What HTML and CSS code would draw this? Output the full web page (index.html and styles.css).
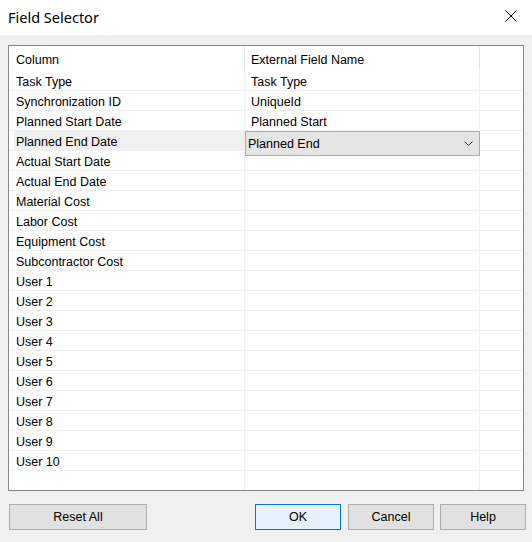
FILE: index.html
```html
<!DOCTYPE html>
<html>
<head>
<meta charset="utf-8">
<link rel="stylesheet" href="styles.css">
</head>
<body>
<div class="window">
  <div class="titlebar">
    <span class="title">Field Selector</span>
    <svg class="close" width="12" height="12" viewBox="0 0 12 12"><path d="M0.5 0.5 L11.5 11.5 M11.5 0.5 L0.5 11.5" stroke="#000" stroke-width="1" fill="none"/></svg>
  </div>
  <div class="content">
    <div class="grid">
      <div class="hrow">
        <div class="hc c1">Column</div>
        <div class="hc c2">External Field Name</div>
        <div class="hc c3"></div>
      </div>
      <div class="row"><div class="cell c1">Task Type</div><div class="cell c2">Task Type</div><div class="cell c3"></div></div>
      <div class="row"><div class="cell c1">Synchronization ID</div><div class="cell c2">UniqueId</div><div class="cell c3"></div></div>
      <div class="row"><div class="cell c1">Planned Start Date</div><div class="cell c2">Planned Start</div><div class="cell c3"></div></div>
      <div class="row"><div class="cell c1 sel">Planned End Date</div><div class="cell c2 has-combo">
        <div class="combo"><span>Planned End</span><svg class="chev" width="9" height="5" viewBox="0 0 9 5"><path d="M0.5 0.5 L4.5 4.5 L8.5 0.5" stroke="#333" stroke-width="1" fill="none"/></svg></div>
      </div><div class="cell c3"></div></div>
      <div class="row"><div class="cell c1">Actual Start Date</div><div class="cell c2"></div><div class="cell c3"></div></div>
      <div class="row"><div class="cell c1">Actual End Date</div><div class="cell c2"></div><div class="cell c3"></div></div>
      <div class="row"><div class="cell c1">Material Cost</div><div class="cell c2"></div><div class="cell c3"></div></div>
      <div class="row"><div class="cell c1">Labor Cost</div><div class="cell c2"></div><div class="cell c3"></div></div>
      <div class="row"><div class="cell c1">Equipment Cost</div><div class="cell c2"></div><div class="cell c3"></div></div>
      <div class="row"><div class="cell c1">Subcontractor Cost</div><div class="cell c2"></div><div class="cell c3"></div></div>
      <div class="row"><div class="cell c1">User 1</div><div class="cell c2"></div><div class="cell c3"></div></div>
      <div class="row"><div class="cell c1">User 2</div><div class="cell c2"></div><div class="cell c3"></div></div>
      <div class="row"><div class="cell c1">User 3</div><div class="cell c2"></div><div class="cell c3"></div></div>
      <div class="row"><div class="cell c1">User 4</div><div class="cell c2"></div><div class="cell c3"></div></div>
      <div class="row"><div class="cell c1">User 5</div><div class="cell c2"></div><div class="cell c3"></div></div>
      <div class="row"><div class="cell c1">User 6</div><div class="cell c2"></div><div class="cell c3"></div></div>
      <div class="row"><div class="cell c1">User 7</div><div class="cell c2"></div><div class="cell c3"></div></div>
      <div class="row"><div class="cell c1">User 8</div><div class="cell c2"></div><div class="cell c3"></div></div>
      <div class="row"><div class="cell c1">User 9</div><div class="cell c2"></div><div class="cell c3"></div></div>
      <div class="row"><div class="cell c1">User 10</div><div class="cell c2"></div><div class="cell c3"></div></div>
      <div class="row filler"><div class="cell c1"></div><div class="cell c2"></div><div class="cell c3"></div></div>
    </div>
    <div class="buttons">
      <button class="btn reset">Reset All</button>
      <div class="spacer"></div>
      <button class="btn ok">OK</button>
      <button class="btn cancel">Cancel</button>
      <button class="btn help">Help</button>
    </div>
  </div>
</div>
</body>
</html>
```

FILE: styles.css
```css
html, body {
  margin: 0;
  padding: 0;
}
body {
  width: 532px;
  height: 542px;
  background: #f0f0f0;
  font-family: "Liberation Sans", Arial, sans-serif;
  font-size: 12.5px;
  color: #000;
  overflow: hidden;
}
.window {
  display: flex;
  flex-direction: column;
  height: 542px;
}
.titlebar {
  height: 35px;
  background: #fff;
  display: flex;
  align-items: center;
  justify-content: space-between;
  padding: 0 15px 0 8px;
  box-sizing: border-box;
}
.title {
  font-family: "Noto Sans", "Open Sans", sans-serif;
  font-size: 14.5px;
  color: #000;
  margin-top: -1px;
}
.close {
  display: block;
  margin-top: -3px;
}
.content {
  padding: 10px 7px 0 8px;
}
.grid {
  width: 516px;
  height: 446px;
  box-sizing: border-box;
  border: 1px solid #828790;
  background: #fff;
  display: flex;
  flex-direction: column;
}
.hrow {
  display: flex;
  height: 25px;
  flex: none;
}
.hc {
  box-sizing: border-box;
  display: flex;
  align-items: center;
  border-right: 1px solid #e5e5e5;
  margin: 1px 0;
  padding-top: 2px;
}
.hc.c3 { border-right: none; }
.c1 { width: 236px; padding-left: 7px; box-sizing: border-box; flex: none; }
.c2 { width: 235px; padding-left: 6px; box-sizing: border-box; flex: none; }
.c3 { flex: 1; }
.row {
  display: flex;
  height: 20px;
  flex: none;
  border-bottom: 1px solid #f0f0f0;
  box-sizing: border-box;
}
.row.filler {
  height: 19px;
  border-bottom: none;
}
.cell {
  display: flex;
  align-items: center;
  box-sizing: border-box;
  padding-top: 2px;
}
.row .c1, .row .c2 {
  border-right: 1px solid #f0f0f0;
}
.row .c1 { width: 236px; }
.row .c2 { width: 235px; }
.cell.sel {
  background: #f0f0f0;
  border-left: 5px solid #fff;
  padding-left: 2px;
}
.has-combo {
  position: relative;
}
.combo {
  position: absolute;
  left: 0;
  top: 0;
  width: 235px;
  height: 25px;
  box-sizing: border-box;
  background: #e5e5e5;
  border: 1px solid #adadad;
  display: flex;
  align-items: center;
  justify-content: space-between;
  padding: 0 6px 0 2px;
  z-index: 2;
}
.chev { display: block; margin-top: -1px; }
.buttons {
  display: flex;
  margin-top: 13px;
  padding-left: 1px;
  width: 517px;
}
.spacer { flex: 1; }
.btn {
  font-family: "Liberation Sans", Arial, sans-serif;
  font-size: 12.5px;
  color: #000;
  height: 26px;
  box-sizing: border-box;
  background: #e1e1e1;
  border: 1px solid #adadad;
  padding: 0;
  margin: 0;
  border-radius: 0;
}
.reset { width: 138px; }
.ok {
  width: 86px;
  background: #e5f1fb;
  border-color: #0078d7;
}
.cancel { width: 86px; margin-left: 7px; }
.help { width: 86px; margin-left: 6px; }
```
